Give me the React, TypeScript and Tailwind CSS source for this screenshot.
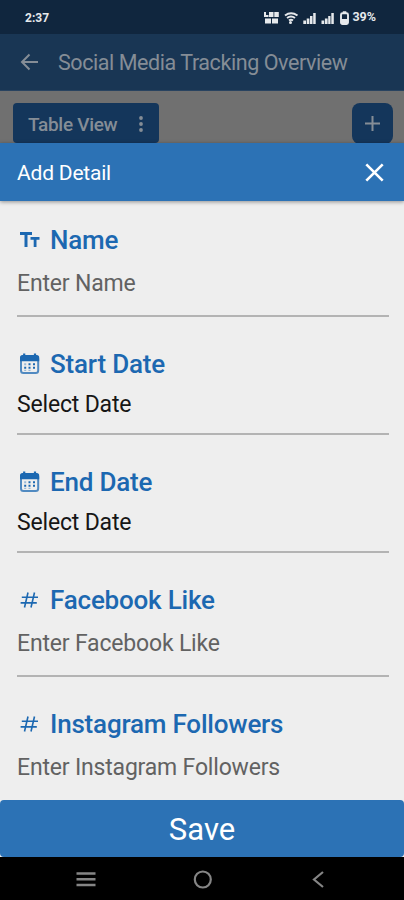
import React from 'react';
import clsx from 'clsx';

type FieldType = 'text' | 'date' | 'number';

interface Field {
  id: number;
  label: string;
  type: FieldType;
  hint: string;
}

const fields: Field[] = [
  { id: 1, label: 'Name', type: 'text', hint: 'Enter Name' },
  { id: 2, label: 'Start Date', type: 'date', hint: 'Select Date' },
  { id: 3, label: 'End Date', type: 'date', hint: 'Select Date' },
  { id: 4, label: 'Facebook Like', type: 'number', hint: 'Enter Facebook Like' },
  { id: 5, label: 'Instagram Followers', type: 'number', hint: 'Enter Instagram Followers' },
];

const FieldIcon: React.FC<{ type: FieldType }> = ({ type }) => {
  if (type === 'text') {
    return (
      <svg width="20" height="20" viewBox="0 0 20 20" fill="currentColor">
        <path d="M0 2h12v3H7.500v12h-3V5H0z" />
        <path d="M10.500 7h9v2.700h-3V17h-2.800V9.700h-3.200z" />
      </svg>
    );
  }
  if (type === 'date') {
    return (
      <svg width="20" height="22" viewBox="0 0 20 22" fill="none">
        <path d="M4.200 .5v3M15 .5v3" stroke="currentColor" strokeWidth="2.200" />
        <rect x="1" y="3.500" width="17.200" height="16.500" rx="2.500" stroke="currentColor" strokeOpacity="0.75" strokeWidth="2" />
        <path d="M0 8.200V4.500A2.500 2.500 0 0 1 2.500 2h14.200a2.500 2.500 0 0 1 2.500 2.500v3.700z" fill="currentColor" />
        <path
          d="M8.500 10.300h2v2h-2zM13 10.300h2v2h-2zM4.200 13.700h2v2h-2zM8.500 13.700h2v2h-2zM13 13.700h2v2h-2z"
          fill="currentColor"
        />
        <path d="M4.200 10.300h2v2h-2zM4.200 16.800h2v1.200h-2zM8.500 16.800h2v1.200h-2z" fill="currentColor" fillOpacity="0.4" />
      </svg>
    );
  }
  return (
    <svg width="20" height="20" viewBox="0 0 20 20" fill="none" stroke="currentColor" strokeWidth="1.600">
      <path d="M8 2.500L4.500 17.500M14.500 2.500L11 17.500M1.800 7.300h16.200M.6 12.900h16.200" />
    </svg>
  );
};

const StatusBar: React.FC = () => (
  <div className="flex h-[34px] items-center justify-between bg-[#10263e] pl-[25px] pr-[28px] pt-px text-[#e6e9ec]">
    <span className="text-[12px] font-bold">2:37</span>
    <div className="flex items-center">
      <svg width="73" height="14" viewBox="0 0 73 14" fill="currentColor" className="mr-[3px]">
        <path d="M0 1h2v3h2.500v2H0zM5 1h4.500v5H5zM10.300 1h4.500v5h-4.500zM1 7.500h6v5H1zM8 7.500h6v5H8z" />
        <path d="M21 4.500q6-4.500 12.500 0M23 7q4-2.800 8 0M25 9.500q2-1.500 4 0" fill="none" stroke="currentColor" strokeWidth="2" />
        <circle cx="26.500" cy="11.500" r="1.500" />
        <path d="M39.300 9.500H42V13h-2.700zM42.700 7.500h2.700V13h-2.700zM46 5h2.500v8H46zM49.200 2h2.500v11h-2.500z" />
        <path d="M57.500 9.500h2.700V13h-2.700zM60.900 7.500h2.700V13h-2.700zM64.200 5h2.300v8h-2.300zM67.300 2h2.500v11h-2.500z" />
      </svg>
      <svg width="9" height="14" viewBox="0 0 9 14" className="mr-[3px]">
        <rect x="1" y="2.300" width="7" height="10.700" rx="1.500" fill="none" stroke="currentColor" strokeWidth="1.900" />
        <path d="M2.800.3h3.500v2H2.800zM1 8h7v5H1z" fill="currentColor" />
      </svg>
      <span className="text-[12.500px] font-bold">39%</span>
    </div>
  </div>
);

const PageBehind: React.FC = () => (
  <>
    <header className="flex h-[56px] items-center bg-[#193654] pl-5 text-[#858d96]">
      <svg width="19" height="18" viewBox="0 0 19 18" fill="none" stroke="currentColor" strokeWidth="2">
        <path d="M18 9H2.500M9.500 1.500L2 9l7.500 7.500" />
      </svg>
      <h1 className="ml-[19px] whitespace-nowrap pt-[3px] text-[21.500px] tracking-[-0.430px]">Social Media Tracking Overview</h1>
    </header>
    <div className="flex h-[53px] items-start justify-between overflow-hidden border-t border-[#294360] bg-[#707070] pl-[13px] pr-[11px] pt-3">
      <div className="flex h-[40px] w-[146px] items-center rounded bg-[#14365b] pl-[15px] pt-px text-[#858d96]">
        <span className="w-[90px] whitespace-nowrap pt-[3px] text-[19px] font-medium tracking-[-0.300px]">Table View</span>
        <svg width="6" height="18" viewBox="0 0 6 18" fill="currentColor" className="ml-5">
          <circle cx="3" cy="3" r="1.900" />
          <circle cx="3" cy="9" r="1.900" />
          <circle cx="3" cy="15" r="1.900" />
        </svg>
      </div>
      <div className="flex h-[41px] w-[41px] items-center justify-center rounded-lg bg-[#14365b] text-[#858d96]">
        <svg width="15" height="15" viewBox="0 0 15 15" stroke="currentColor" strokeWidth="2">
          <path d="M7.500 0v15M0 7.500h15" />
        </svg>
      </div>
    </div>
  </>
);

const FormField: React.FC<{ field: Field }> = ({ field }) => {
  const isDate = field.type === 'date';
  return (
    <div className={clsx('shrink-0 border-b-2 border-[#b3b3b3] last:border-b-0', isDate ? 'h-[88px]' : 'h-[94px]')}>
      <div className="flex h-8 items-center text-[#1c68b1]">
        <span className="ml-[3px] flex w-[30px] pt-px">
          <FieldIcon type={field.type} />
        </span>
        <span className="whitespace-nowrap pt-[3px] text-[26px] font-medium tracking-[-0.200px]">{field.label}</span>
      </div>
      <div
        className={clsx(
          'flex items-center whitespace-nowrap pt-[3px] text-[23px] tracking-[-0.180px]',
          isDate ? 'h-[50px] text-[#161616]' : 'h-[56px] text-[#626262]'
        )}
      >
        {field.hint}
      </div>
    </div>
  );
};

const NavBar: React.FC = () => (
  <nav className="flex h-[43px] shrink-0 items-center bg-black pl-[76px] text-[#858585]">
    <svg width="20" height="20" viewBox="0 0 20 20" stroke="currentColor" strokeWidth="2.500">
      <path d="M.5 4.500h19M.5 10.300h19M.5 16h19" />
    </svg>
    <svg width="20" height="20" viewBox="0 0 20 20" fill="none" stroke="currentColor" strokeWidth="2.200" className="ml-[97px]">
      <circle cx="9.800" cy="10.500" r="8" />
    </svg>
    <svg width="12" height="20" viewBox="0 0 12 20" fill="none" stroke="currentColor" strokeWidth="2.200" className="ml-[99px]">
      <path d="M11 3L2 10.500l9 7.500" />
    </svg>
  </nav>
);

const App: React.FC = () => {
  return (
    <div className="flex h-[900px] w-[404px] flex-col overflow-hidden bg-[#707070] font-['Roboto',sans-serif]">
      <StatusBar />
      <PageBehind />

      <section className="flex min-h-0 flex-1 flex-col bg-[#eeeeee]">
        <div className="z-10 flex h-[58px] shrink-0 items-center justify-between bg-[#2c72b5] pl-[17px] pr-5 text-white shadow-[0_1px_4px_rgba(0,0,0,0.4)]">
          <h2 className="whitespace-nowrap pt-[3px] text-[21px] tracking-[-0.200px]">Add Detail</h2>
          <svg width="19" height="19" viewBox="0 0 19 19" stroke="currentColor" strokeWidth="2.600">
            <path d="M1.300 1.300l16.400 16.400M17.700 1.300L1.300 17.700" />
          </svg>
        </div>

        <div className="flex min-h-0 flex-1 flex-col gap-[30px] overflow-hidden pl-[17px] pr-[15px] pt-[22px]">
          {fields.map((field) => (
            <FormField key={field.id} field={field} />
          ))}
        </div>

        <button className="h-[57px] shrink-0 rounded-sm bg-[#2c72b5] pt-[3px] text-[31px] text-white">Save</button>
      </section>

      <NavBar />
    </div>
  );
};

export default App;
